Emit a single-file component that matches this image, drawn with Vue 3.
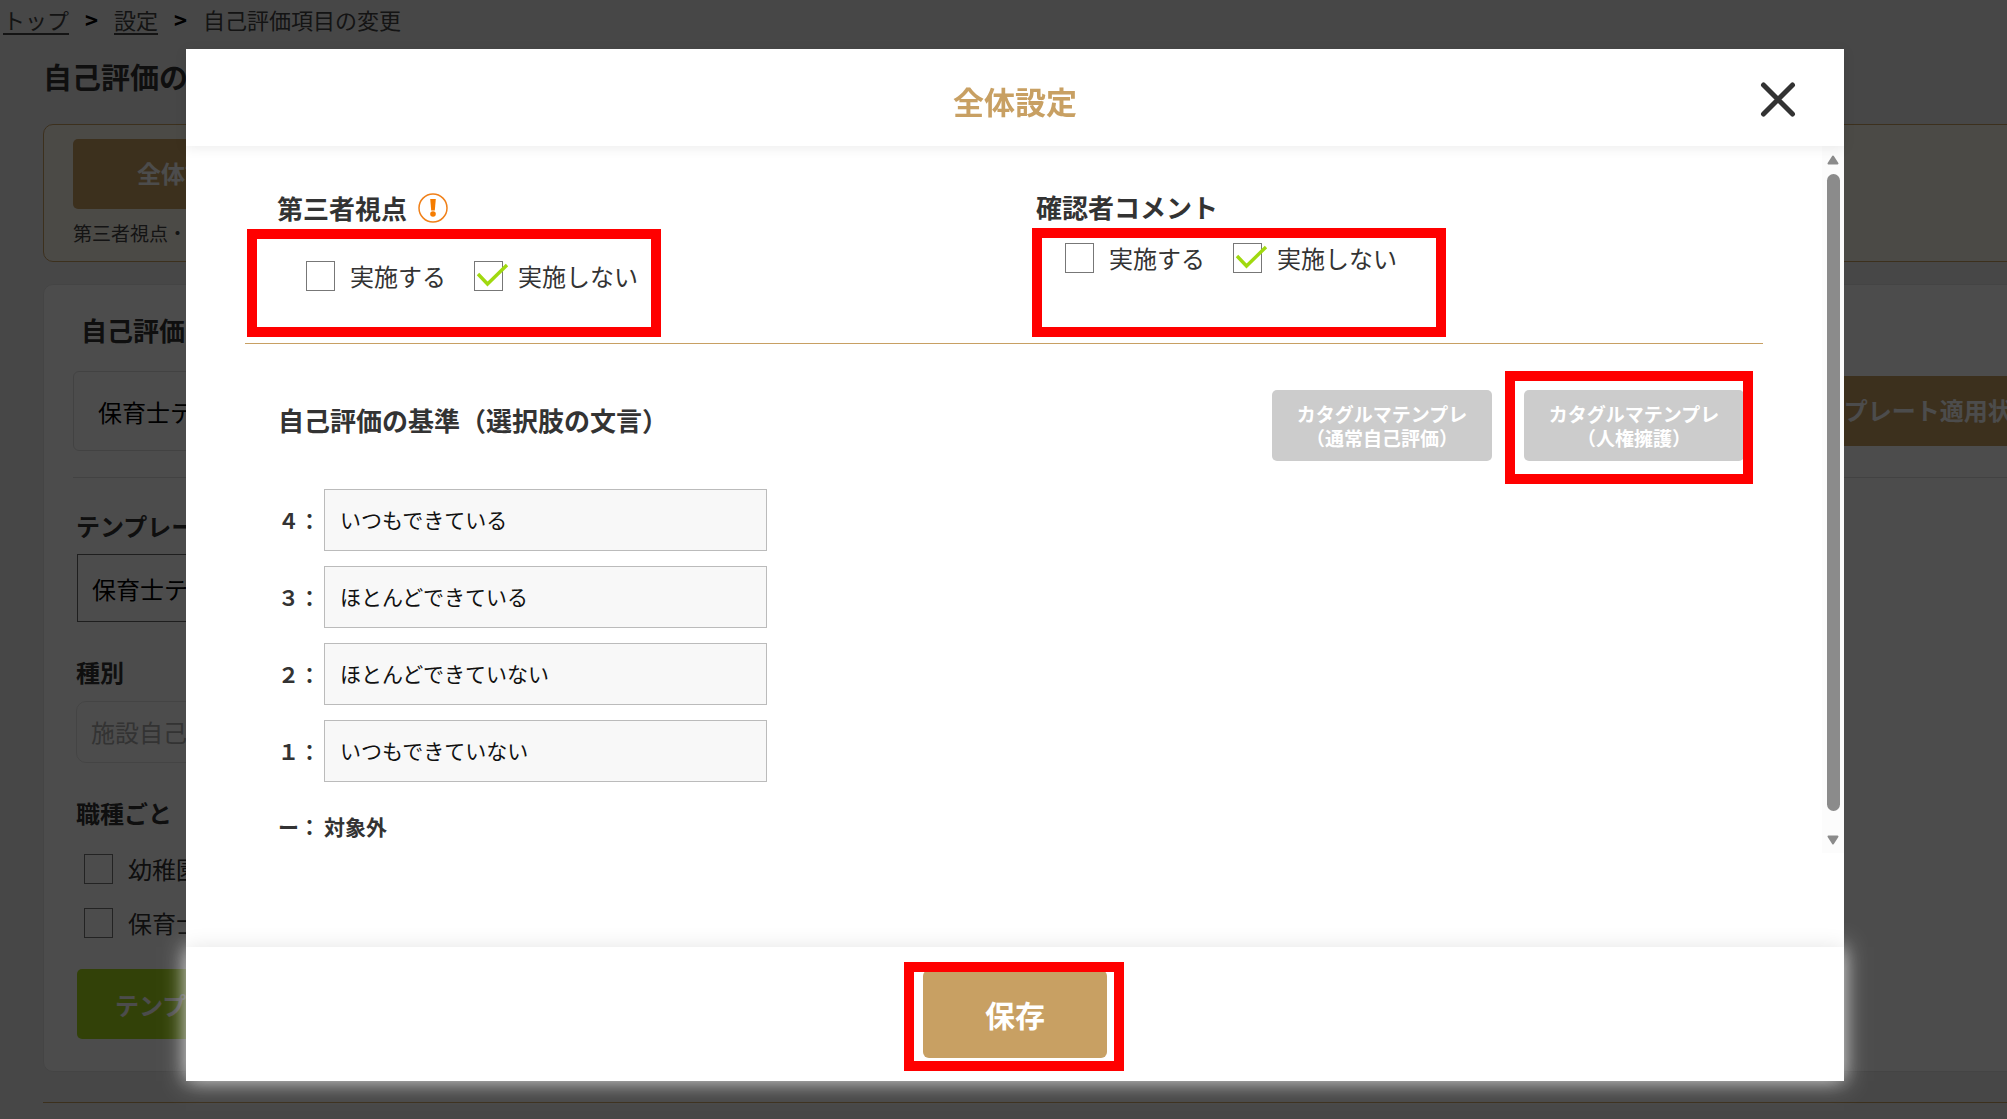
<script setup>
import { ref } from 'vue'

const settings = ref([
  { id: 'third', title: '第三者視点', info: true, value: 'no' },
  { id: 'comment', title: '確認者コメント', info: false, value: 'no' },
])
const choices = [
  { key: 'yes', label: '実施する' },
  { key: 'no', label: '実施しない' },
]
const grades = ref([
  { mark: '４', text: 'いつもできている' },
  { mark: '３', text: 'ほとんどできている' },
  { mark: '２', text: 'ほとんどできていない' },
  { mark: '１', text: 'いつもできていない' },
])
const jobs = ['幼稚園教諭', '保育士']
</script>

<template>
  <div class="page">
    <nav class="crumbs">
      <a href="#top">トップ</a><b>&gt;</b><a href="#settings">設定</a><b>&gt;</b><span>自己評価項目の変更</span>
    </nav>
    <main class="main">
      <h1>自己評価の</h1>
      <section class="panel cream">
        <button type="button" class="btn brown">全体設定</button>
        <p>第三者視点・確認者コメント</p>
      </section>
      <section class="panel card">
        <h2>自己評価</h2>
        <div class="apply">
          <input class="picker" aria-label="自己評価" value="保育士テンプレート" />
          <button type="button" class="btn brown">テンプレート適用状況</button>
        </div>
        <hr />
        <div class="form">
          <label class="name" for="tpl">テンプレート</label>
          <input id="tpl" class="tpl" value="保育士テンプレート" />
          <label class="name" for="kind">種別</label>
          <input id="kind" class="kind" value="施設自己評価" disabled />
          <h3 class="name">職種ごと</h3>
          <div class="jobs">
            <label v-for="j in jobs" :key="j" class="check">
              <span class="box"><input type="checkbox" /></span>{{ j }}
            </label>
          </div>
          <button type="button" class="btn green">テンプレート</button>
        </div>
      </section>
      <div class="rule"></div>
    </main>
  </div>

  <div class="overlay">
    <div class="modal" role="dialog" aria-labelledby="dlg-title">
      <header class="head">
        <h2 id="dlg-title">全体設定</h2>
        <button type="button" class="close" aria-label="閉じる">
          <svg width="36" height="36" viewBox="0 0 36 36"><path d="M3.500 4L32.500 33M32.500 4L3.500 33" stroke="#333" stroke-width="5" stroke-linecap="round" /></svg>
        </button>
      </header>

      <div class="body">
        <div class="content">
          <div class="settings">
            <section v-for="s in settings" :key="s.id" class="setting" :class="s.id">
              <h3>
                {{ s.title }}
                <svg v-if="s.info" width="32" height="32" viewBox="0 0 32 32">
                  <circle cx="16" cy="16" r="14" fill="#fff" stroke="#f08019" stroke-width="1.5" />
                  <path d="M13.2 7h5.6l-1 11.600h-3.600z" fill="#f57c00" />
                  <circle cx="16" cy="22" r="2.800" fill="#f57c00" />
                </svg>
              </h3>
              <div class="options">
                <label v-for="c in choices" :key="c.key" class="check">
                  <span class="box">
                    <input type="checkbox" :checked="s.value === c.key" @change="s.value = c.key" />
                    <svg v-if="s.value === c.key" class="tick" width="36" height="30" viewBox="0 0 36 30"><path d="M4 13L13.500 23L33 4" fill="none" stroke="#a0d90f" stroke-width="3.400" /></svg>
                  </span>{{ c.label }}
                </label>
                <span class="mark"></span>
              </div>
            </section>
          </div>

          <section class="criteria">
            <div class="bar">
              <h3>自己評価の基準（選択肢の文言）</h3>
              <div class="templates">
                <button type="button">カタグルマテンプレ<br />（通常自己評価）</button>
                <div class="marked">
                  <button type="button">カタグルマテンプレ<br />（人権擁護）</button>
                  <span class="mark"></span>
                </div>
              </div>
            </div>
            <div class="grades">
              <label v-for="g in grades" :key="g.mark">
                <span>{{ g.mark }}：</span><input v-model="g.text" type="text" />
              </label>
              <p><span>ー：</span>対象外</p>
            </div>
          </section>
        </div>
        <div class="track">
          <svg width="12" height="10" viewBox="0 0 12 10"><path d="M6 1.500L10.500 8.500H1.500Z" fill="#8b8b8b" stroke="#8b8b8b" stroke-width="2" stroke-linejoin="round" /></svg>
          <div class="thumb"></div>
          <svg width="12" height="10" viewBox="0 0 12 10"><path d="M6 8.500L10.500 1.500H1.500Z" fill="#8b8b8b" stroke="#8b8b8b" stroke-width="2" stroke-linejoin="round" /></svg>
        </div>
      </div>

      <footer class="foot">
        <div class="marked">
          <button type="button" class="save">保存</button>
          <span class="mark"></span>
        </div>
      </footer>
    </div>
  </div>
</template>

<style>
html,
body {
  height: 100%;
  overflow: hidden;
  background: #eee;
}
</style>

<style scoped>
* {
  box-sizing: border-box;
}
.page,
.overlay {
  font-family: "Noto Sans CJK JP", sans-serif;
  color: #333;
}
.page {
  overflow: hidden;
}
h1, h2, h3, p {
  margin: 0;
}
button,
input {
  font-family: inherit;
}
button {
  border: 0;
  padding: 0;
  font-weight: 700;
  color: #fff;
}
.crumbs {
  display: flex;
  gap: 16px;
  padding: 0 3px;
  font-size: 22px;
  line-height: 38px;
  color: #444;
}
.crumbs a {
  color: #444;
  text-decoration: underline;
  text-underline-offset: 4px;
}
.crumbs b {
  color: #000;
}
.main {
  margin: 0 -123px 0 43px;
}
h1 {
  font-size: 29px;
  line-height: 76px;
}
.panel {
  padding: 14px 29px;
  border: 1px solid #e5e5e5;
  border-radius: 10px;
}
.cream {
  margin: 10px 0 22px;
  height: 138px;
  background: #fcf7ec;
  border-color: #c8a063;
}
.cream p {
  font-size: 19px;
  line-height: 48px;
  color: #444;
}
.btn {
  height: 70px;
  padding: 0 64px 4px;
  border-radius: 5px;
  font-size: 24px;
}
.brown {
  background: #c8a063;
}
.green {
  margin: 31px 0 0 1px;
  padding: 0 38px;
  background: #a9db1b;
}
.card {
  height: 788px;
  background: #fff;
}
.card h2 {
  padding: 11px 8px 13px;
  font-size: 26px;
  line-height: 40px;
}
.apply {
  display: flex;
  align-items: center;
  gap: 40px;
  margin-top: 8px;
}
.picker {
  flex: 1;
  height: 80px;
  padding: 0 24px;
  border: 1px solid #ddd;
  border-radius: 6px;
  font-size: 24px;
  background: #fff;
}
.apply .btn {
  width: 368px;
}
hr {
  height: 1px;
  margin: 26px 0 24px;
  border: 0;
  background: #ddd;
}
.form {
  display: flex;
  flex-direction: column;
  align-items: flex-start;
  padding: 0 3px;
}
.name {
  font-size: 24px;
  font-weight: 700;
  line-height: 48px;
}
.tpl,
.kind {
  width: 400px;
  font-size: 24px;
  background: #fff;
}
.tpl {
  height: 68px;
  margin: 4px 0 26px 1px;
  padding: 0 14px;
  border: 1px solid #666;
}
.kind {
  height: 62px;
  margin: 5px 0 26px;
  padding: 0 14px 2px;
  border: 1px solid #e5e5e5;
  border-radius: 10px;
  color: #aaa;
}
.check {
  display: flex;
  align-items: center;
  gap: 15px;
  font-size: 24px;
  line-height: 30px;
}
.jobs {
  display: grid;
  gap: 24px;
  margin: 17px 0 0 8px;
}
.box {
  position: relative;
  display: flex;
}
.box input {
  appearance: none;
  width: 29px;
  height: 30px;
  margin: 0;
  border: 1px solid #777;
  background: #fff;
}
.tick {
  position: absolute;
  top: 0;
  left: 0;
}
.rule {
  height: 1px;
  margin-top: 30px;
  background: #c8a063;
}

.overlay {
  position: fixed;
  inset: 0;
  display: flex;
  padding: 49px 163px 38px 186px;
  background: rgba(0, 0, 0, 0.7);
}
.modal {
  flex: 1;
  display: flex;
  flex-direction: column;
  background: #fff;
}
.head {
  position: relative;
  padding: 27px 0 21px;
  box-shadow: 0 2px 12px rgba(0, 0, 0, 0.08);
}
.head h2 {
  font-size: 31px;
  line-height: 49px;
  text-align: center;
  color: #c8a063;
}
.close {
  position: absolute;
  top: 32px;
  right: 48px;
  height: 36px;
  background: none;
}
.body {
  flex: 1;
  display: flex;
  padding-bottom: 94px;
}
.content {
  flex: 1;
  padding: 0 59px;
}
.content h3 {
  font-size: 26px;
}
.settings {
  display: grid;
  grid-template-columns: 1fr 1fr;
  border-bottom: 1px solid #c8a063;
}
.setting {
  padding: 41px 0 0 32px;
}
.setting h3 {
  display: flex;
  align-items: center;
  gap: 10px;
  height: 41px;
  line-height: 40px;
}
.comment h3 {
  align-items: flex-start;
}
.options {
  position: relative;
  display: flex;
  gap: 28px;
  min-height: 115px;
  padding: 33px 29px;
}
.comment .options {
  padding-top: 15px;
}
.options .check {
  height: 30px;
}
.mark {
  position: absolute;
  border: 10px solid #f00;
  pointer-events: none;
}
.options .mark {
  top: 1px;
  left: -30px;
  width: 414px;
  height: 108px;
}
.comment .options .mark {
  top: 0;
  left: -4px;
  height: 109px;
}
.criteria {
  padding: 46px 19px 0 33px;
}
.bar {
  display: flex;
  justify-content: space-between;
  margin-bottom: 28px;
}
.bar h3 {
  line-height: 59px;
}
.templates {
  display: flex;
  gap: 32px;
}
.templates button {
  width: 220px;
  height: 71px;
  border-radius: 5px;
  background: #ccc;
  font-size: 19px;
  line-height: 24px;
}
.marked {
  position: relative;
}
.templates .mark {
  inset: -19px -9px -23px -19px;
}
.grades {
  display: flex;
  flex-direction: column;
  gap: 15px;
  font-size: 21px;
  font-weight: 700;
}
.grades label {
  display: flex;
  align-items: center;
  height: 62px;
}
.grades p {
  display: flex;
  height: 56px;
  line-height: 58px;
}
.grades span {
  width: 46px;
}
.grades input {
  width: 443px;
  height: 62px;
  padding: 0 15px 2px;
  border: 1px solid #bbb;
  background: #f8f8f8;
  font-size: 21px;
  color: #111;
}
.track {
  display: flex;
  flex-direction: column;
  align-items: center;
  gap: 9px;
  width: 22px;
  padding: 9px 0 8px;
  background: #fcfcfc;
}
.thumb {
  flex: 1;
  width: 13px;
  margin-bottom: 15px;
  border-radius: 7px;
  background: #8b8b8b;
}
.foot {
  display: flex;
  justify-content: center;
  padding: 23px 0;
  background: #fff;
  box-shadow: 0 0 20px #e5e5e5;
}
.save {
  display: block;
  width: 184px;
  height: 88px;
  border-radius: 6px;
  background: #c8a063;
  font-size: 30px;
}
.foot .mark {
  inset: -8px -17px -13px -19px;
}
</style>
